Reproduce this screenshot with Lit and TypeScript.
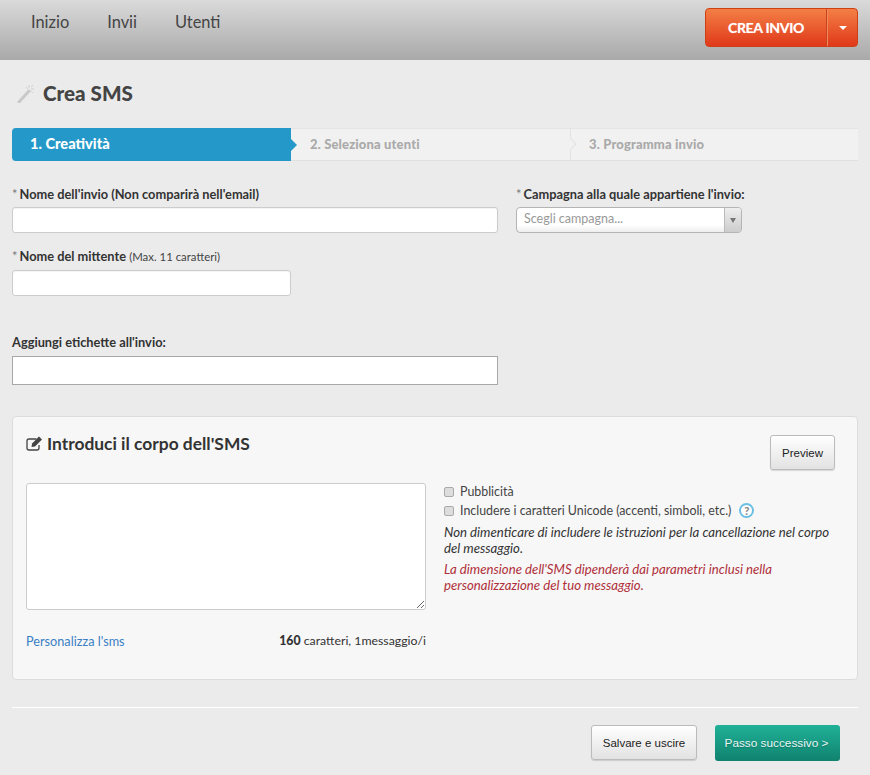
import { LitElement, html, css } from "lit";
import { customElement } from "lit/decorators.js";

@customElement("app-root")
export class AppRoot extends LitElement {
  static styles = css`
    :host { display: block; width: 870px; height: 775px; overflow: hidden; background: #ebebeb; font-family: Lato, "Open Sans", sans-serif; color: #333; }
    * { box-sizing: border-box; }
    .top { height: 60px; background: linear-gradient(#dadada, #a9a9a9); display: flex; justify-content: space-between; padding: 8px 12px 0 31px; }
    nav { display: flex; gap: 38px; font-size: 16.4px; color: #444; line-height: 28px; }
    .split { display: flex; height: 39px; width: 153px; border: 1px solid #cf3f14; border-radius: 4px; overflow: hidden; background: linear-gradient(#f37f45, #e0391a); color: #fff; font-weight: 700; font-size: 14px; text-shadow: 0 0 1px #fff8; }
    .split .main { width: 121px; display: flex; align-items: center; justify-content: center; border-right: 1px solid #c9431c; letter-spacing: -0.3px; }
    .split .drop { flex: 1; display: flex; align-items: center; justify-content: center; border-left: 1px solid #f08a5c; }
    .caret { width: 0; height: 0; border-left: 4px solid transparent; border-right: 4px solid transparent; border-top: 4px solid #fff; }
    main { padding: 0 12px; }
    .title { display: flex; align-items: center; gap: 6px; height: 68px; padding: 0 0 2px 5px; }
    h1 { margin: 0; font-size: 20.6px; font-weight: 900; color: #444; }
    .steps { display: flex; height: 33px; background: #f1f1f1; border-top: 1px solid #e4e4e4; border-bottom: 1px solid #e0e0e0; font-size: 13px; font-weight: 900; letter-spacing: 0.15px; color: #aaa; position: relative; }
    .step { width: 279px; display: flex; align-items: center; padding: 0 0 2px 19px; position: relative; flex: none; }
    .step.last { width: 288px; border-left: 1px solid #e2e2e2; padding-left: 18px; }
    .step.active { margin-top: -1px; margin-bottom: -1px; background: #2499c9; color: #fff; border-radius: 4px 0 0 4px; font-size: 14.6px; letter-spacing: 0; padding-left: 18px; }
    .step.active::after { content: ""; position: absolute; right: -6px; top: 11px; border-left: 6px solid #2499c9; border-top: 6px solid transparent; border-bottom: 6px solid transparent; }
    .notch { position: absolute; left: -4px; top: 11px; width: 8px; height: 8px; border-top: 1px solid #e2e2e2; border-right: 1px solid #e2e2e2; background: #f1f1f1; transform: rotate(45deg); }
    .form { display: grid; grid-template-columns: 486px 226px; column-gap: 18px; margin-top: 26px; }
    label { display: block; font-size: 12.8px; font-weight: 700; color: #333; line-height: 14px; margin-bottom: 6px; white-space: nowrap; }
    label .req { font-weight: 400; color: #777; margin-right: -1px; }
    label small { font-size: 11.4px; font-weight: 400; color: #444; }
    input.text { display: block; width: 100%; height: 26px; background: #fff; border: 1px solid #ccc; border-radius: 3px; box-shadow: inset 0 1px 1px #0000000d; }
    .sender { width: 279px !important; }
    .f2 { margin-top: 16px; height: 86px; }
    .f3 label { margin-bottom: 7px; }
    .tags { display: block; width: 486px; height: 29px; background: #fff; border: 1px solid #a8a8a8; }
    .select { display: flex; height: 26px; border: 1px solid #b4b4b4; border-radius: 4px; overflow: hidden; background: linear-gradient(#fff 70%, #eee); color: #999; font-size: 12.5px; }
    .select span { flex: 1; padding: 0 7px; line-height: 22px; }
    .select i { width: 17px; border-left: 1px solid #bbb; background: linear-gradient(#eee, #ccc); display: flex; align-items: center; justify-content: center; }
    .select i b { border-left: 3px solid transparent; border-right: 3px solid transparent; border-top: 5px solid #777; }
    .panel { height: 264px; margin-top: 31px; background: #f7f7f7; border: 1px solid #dcdcdc; border-radius: 4px; padding: 18px 22px 0 13px; }
    .phead { display: flex; justify-content: space-between; height: 48px; }
    h2 { margin: 0; font-size: 17.4px; font-weight: 700; color: #333; display: flex; align-items: center; gap: 4px; height: 16px; }
    .btn { border: 1px solid #bbb; border-radius: 3px; background: linear-gradient(#fff, #e2e2e2); box-shadow: 0 1px 1px #0002; font: 11.5px "Liberation Sans", Arial, sans-serif; color: #222; height: 35px; display: flex; align-items: center; justify-content: center; }
    .preview { width: 65px; }
    .cols { display: grid; grid-template-columns: 400px 400px; column-gap: 18px; }
    textarea { display: block; width: 400px; height: 127px; background: #fff; border: 1px solid #ccc; border-radius: 3px; margin: 0; }
    .meta { display: flex; justify-content: space-between; margin-top: 23px; font-size: 12.3px; line-height: 16px; color: #333; }
    .meta a { color: #3a7fc4; text-decoration: none; font-size: 12.7px; }
    .meta b { font-weight: 900; }
    .opt { display: flex; align-items: center; gap: 6px; font-size: 12.4px; line-height: 19px; height: 19px; color: #444; white-space: nowrap; }
    .opt input { appearance: none; margin: 0; width: 10px; height: 10px; border: 1px solid #aaa; border-radius: 2px; background: #ddd; }
    .right { margin-top: -1px; }
    .help { width: 15px; height: 15px; border: 2px solid #6cbfe4; border-radius: 50%; margin-left: 2px; color: #888; font-size: 11px; font-weight: 900; display: flex; align-items: center; justify-content: center; background: #fff; }
    .note { margin: 0; font-size: 13.2px; font-style: italic; line-height: 16px; color: #333; }
    .note.warn { margin-top: 5px; color: #b0303a; }
    .note.first { margin-top: 4px; }
    hr { border: 0; border-top: 1px solid #fff; margin: 27px 0 0; }
    .foot { display: flex; justify-content: flex-end; gap: 18px; padding: 17px 18px 0 0; }
    .save { width: 106px; }
    .next { width: 125px; height: 36px; border-radius: 3px; background: linear-gradient(#20b198, #10826e); color: #e6f7f3; font: 11.8px "Liberation Sans", Arial, sans-serif; padding-right: 2px; display: flex; align-items: center; justify-content: center; border: 0; text-shadow: 0 1px 1px #0003; }
  `;

  render() {
    return html`
      <header class="top">
        <nav><span>Inizio</span><span>Invii</span><span>Utenti</span></nav>
        <div class="split"><span class="main">CREA INVIO</span><span class="drop"><span class="caret"></span></span></div>
      </header>
      <main>
        <div class="title">
          <svg width="20" height="20" viewBox="0 0 20 20" fill="none">
            <path d="M2 19 L12 8" stroke="#c9c9c9" stroke-width="3" stroke-linecap="round"/>
            <path d="M12 2v3M17 6h-3M9 4l2 2M16 2l-2 2M16 10l-2-2" stroke="#cfcfcf" stroke-width="1"/>
          </svg>
          <h1>Crea SMS</h1>
        </div>
        <div class="steps">
          <div class="step active">1. Creatività</div>
          <div class="step">2. Seleziona utenti</div>
          <div class="step last"><span class="notch"></span>3. Programma invio</div>
        </div>
        <div class="form">
          <div>
            <label><span class="req">*</span> Nome dell'invio (Non comparirà nell'email)</label>
            <input class="text" />
          </div>
          <div>
            <label><span class="req">*</span> Campagna alla quale appartiene l'invio:</label>
            <div class="select"><span>Scegli campagna...</span><i><b></b></i></div>
          </div>
          <div class="f2">
            <label><span class="req">*</span> Nome del mittente <small>(Max. 11 caratteri)</small></label>
            <input class="text sender" />
          </div>
          <div></div>
          <div class="f3">
            <label>Aggiungi etichette all'invio:</label>
            <input class="tags" />
          </div>
        </div>
        <section class="panel">
          <div class="phead">
            <h2>
              <svg width="17" height="15" viewBox="0 0 17 15" fill="none">
                <path d="M10.5 3H3a2 2 0 0 0-2 2v7a2 2 0 0 0 2 2h8a2 2 0 0 0 2-2V9" stroke="#444" stroke-width="1.3"/>
                <path d="M5.5 11l.6-3.4L13 .6l3 3L9 10.4z" fill="#444"/>
              </svg>
              Introduci il corpo dell'SMS
            </h2>
            <div class="btn preview">Preview</div>
          </div>
          <div class="cols">
            <div>
              <textarea></textarea>
              <div class="meta"><a>Personalizza l'sms</a><span><b>160</b> caratteri, 1messaggio/i</span></div>
            </div>
            <div class="right">
              <div class="opt"><input type="checkbox" />Pubblicità</div>
              <div class="opt"><input type="checkbox" />Includere i caratteri Unicode (accenti, simboli, etc.) <span class="help">?</span></div>
              <p class="note first">Non dimenticare di includere le istruzioni per la cancellazione nel corpo del messaggio.</p>
              <p class="note warn">La dimensione dell'SMS dipenderà dai parametri inclusi nella personalizzazione del tuo messaggio.</p>
            </div>
          </div>
        </section>
        <hr />
        <div class="foot">
          <div class="btn save">Salvare e uscire</div>
          <div class="next">Passo successivo &gt;</div>
        </div>
      </main>
    `;
  }
}
